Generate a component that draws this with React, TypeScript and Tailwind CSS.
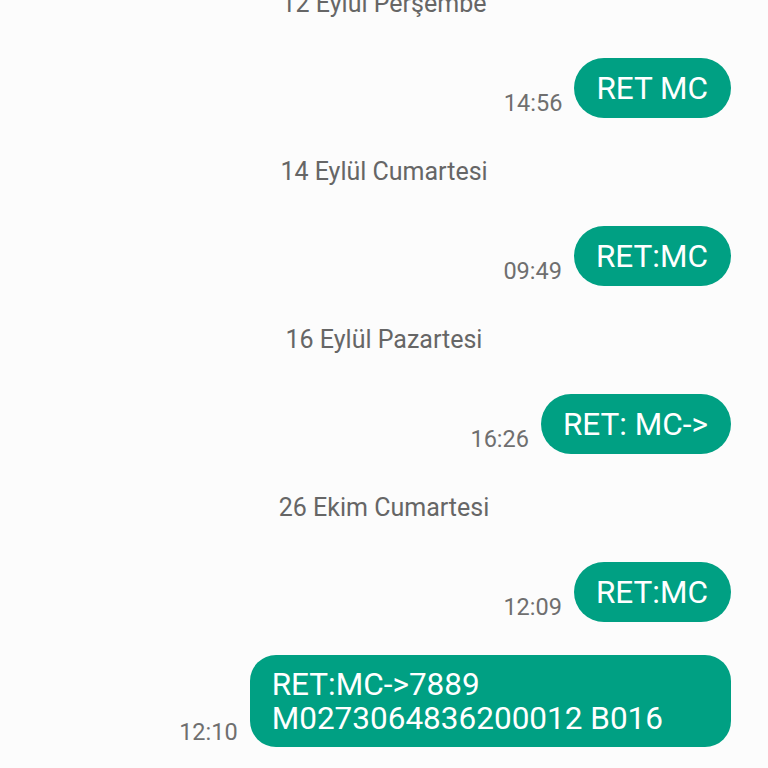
const font = { fontFamily: "Roboto, 'Noto Sans', sans-serif" };

type Item =
  | { kind: "date"; text: string }
  | { kind: "msg"; time: string; lines: string[] };

const ITEMS: Item[] = [
  { kind: "date", text: "12 Eylül Perşembe" },
  { kind: "msg", time: "14:56", lines: ["RET MC"] },
  { kind: "date", text: "14 Eylül Cumartesi" },
  { kind: "msg", time: "09:49", lines: ["RET:MC"] },
  { kind: "date", text: "16 Eylül Pazartesi" },
  { kind: "msg", time: "16:26", lines: ["RET: MC->"] },
  { kind: "date", text: "26 Ekim Cumartesi" },
  { kind: "msg", time: "12:09", lines: ["RET:MC"] },
  { kind: "msg", time: "12:10", lines: ["RET:MC->7889", "M0273064836200012 B016"] },
];

function DateHeader({ text }: { text: string }) {
  return (
    <div className="flex h-[30px] items-center justify-center text-[25px] leading-[30px] text-[#666666]">
      {text}
    </div>
  );
}

function Message({ time, lines }: { time: string; lines: string[] }) {
  const multi = lines.length > 1;
  return (
    <div className="flex items-end justify-end gap-[12px] pr-[37px]">
      <span className="mb-[3px] text-[23.5px] leading-[24px] text-[#6f6f6f]">{time}</span>
      <div
        className={`bg-[#00a083] pl-[22px] text-[31.5px] leading-[34px] text-white ${
          multi
            ? "rounded-[26px] pt-[13px] pb-[11px] pr-[68px]"
            : "rounded-full pt-[14px] pb-[12px] pr-[23px]"
        }`}
      >
        {lines.map((l) => (
          <div key={l}>{l}</div>
        ))}
      </div>
    </div>
  );
}

export default function App() {
  return (
    <div className="h-[768px] w-[768px] overflow-hidden bg-[#fcfcfc]" style={font}>
      <div className="-mt-[11px] flex flex-col">
        {ITEMS.map((item, i) => {
          const prev = ITEMS[i - 1];
          const mt =
            i === 0 ? "" : prev && prev.kind === "msg" && item.kind === "msg" ? "mt-[33px]" : "mt-[39px]";
          return (
            <div key={i} className={mt}>
              {item.kind === "date" ? (
                <DateHeader text={item.text} />
              ) : (
                <Message time={item.time} lines={item.lines} />
              )}
            </div>
          );
        })}
      </div>
    </div>
  );
}
